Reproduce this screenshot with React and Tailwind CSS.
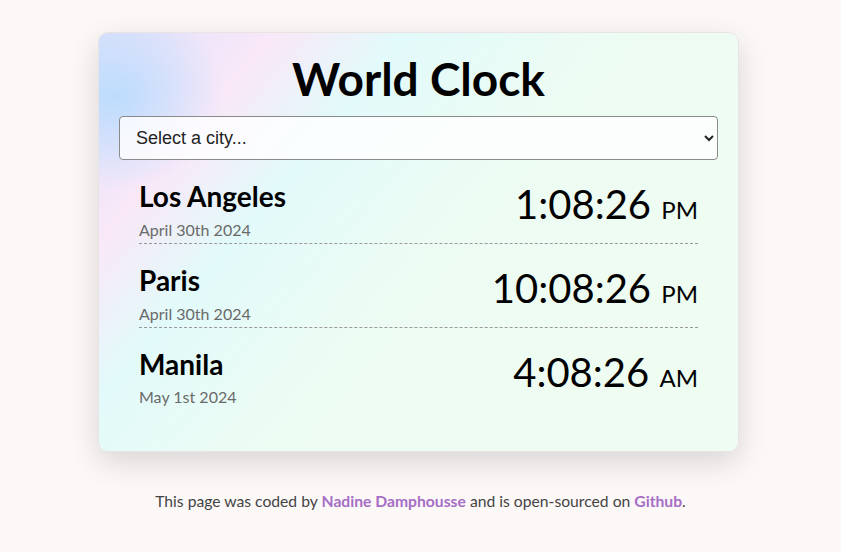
import React from "react";

const cities = [
  { name: "Los Angeles", date: "April 30th 2024", time: "1:08:26", ampm: "PM" },
  { name: "Paris", date: "April 30th 2024", time: "10:08:26", ampm: "PM" },
  { name: "Manila", date: "May 1st 2024", time: "4:08:26", ampm: "AM" },
];

export default function App() {
  return (
    <div className="min-h-[552px] w-full bg-[#fcf8f7] pt-[32px] font-['Lato',_'Noto_Sans',_sans-serif]">
      <div className="flex justify-center pr-[4px]">
        <div className="w-[641px] rounded-[10px] border border-[#e9e4e3] bg-[radial-gradient(ellipse_110px_95px_at_2.5%_15%,rgba(188,220,253,1),rgba(188,220,253,0)_100%),linear-gradient(130deg,#dfe1fb_0%,#f9e8f8_18%,#e2fafa_31%,#edfcf3_52%,#effcf1_100%)] px-5 pt-[18px] pb-[40px] shadow-[0_10px_30px_rgba(0,0,0,0.14)]">
          <h1 className="m-0 text-center text-[46px] font-bold leading-[1.2] text-black">World Clock</h1>
          <select className="mt-[10px] block h-[44px] w-full rounded-[4px] border border-[#8a8a8a] bg-white/80 px-[12px] font-['Liberation_Sans',_Arial,_sans-serif] text-[18px] text-[#222]">
            <option>Select a city...</option>
            <option>Tokyo</option>
            <option>Sydney</option>
          </select>
          <div className="px-5">
            {cities.map((c, i) => (
              <div
                key={c.name}
                className={
                  "flex items-start justify-between pt-[20px] pb-[4px] " +
                  (i < cities.length - 1 ? "border-b border-dashed border-[#9a9a9a]" : "")
                }
              >
                <div>
                  <div className="text-[28px] font-bold leading-[1.2] text-black">{c.name}</div>
                  <div className="mt-[6px] text-[16px] leading-[1.2] text-[#6a6a6a]">{c.date}</div>
                </div>
                <div className="text-[40px] leading-[1.2] text-black">
                  {c.time} <span className="text-[24px]">{c.ampm}</span>
                </div>
              </div>
            ))}
          </div>
        </div>
      </div>
      <p className="mt-[40px] text-center text-[15.7px] leading-[1.2] text-[#444]">
        This page was coded by{" "}
        <a href="#" className="font-bold text-[#a66ec6] no-underline">Nadine Damphousse</a> and is open-sourced on{" "}
        <a href="#" className="font-bold text-[#a66ec6] no-underline">Github</a>.
      </p>
    </div>
  );
}
